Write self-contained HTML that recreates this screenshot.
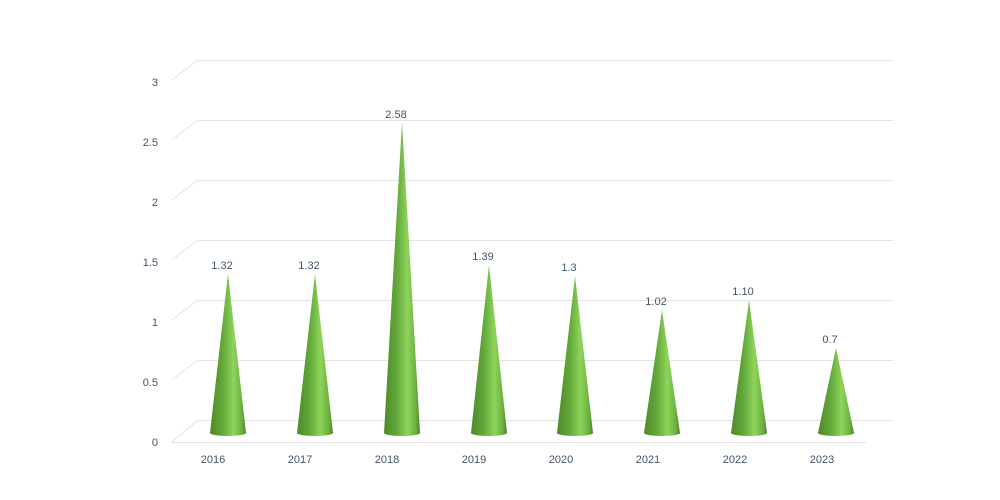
<!DOCTYPE html>
<html><head><meta charset="utf-8"><style>body{margin:0;background:#fff}svg{display:block}text{font-family:"Liberation Sans",sans-serif;font-size:11px;fill:#44546a}</style></head><body>
<svg width="1000" height="500" viewBox="0 0 1000 500">
<defs><linearGradient id="g" x1="0" x2="1" y1="0" y2="0">
<stop offset="0" stop-color="#4e8a28"/><stop offset="0.35" stop-color="#62a83a"/><stop offset="0.65" stop-color="#8fd45a"/><stop offset="0.88" stop-color="#6cb142"/><stop offset="1" stop-color="#4a8526"/></linearGradient></defs>
<g stroke="#e3e3e3" stroke-width="1" fill="none">
<path d="M198 60.5H893M198 120.5H893M198 180.5H893M198 240.5H893M198 300.5H893M198 360.5H893M198 420.5H893"/>
<path d="M172 80L198 60M172 140L198 120M172 200L198 180M172 260L198 240M172 320L198 300M172 380L198 360M172 442L198 420"/>
<path d="M172 442.5H866"/>
</g>
<g text-anchor="end">
<text x="158" y="86">3</text><text x="158" y="146">2.5</text><text x="158" y="206">2</text><text x="158" y="266">1.5</text><text x="158" y="326">1</text><text x="158" y="386">0.5</text><text x="158" y="446">0</text>
</g>
<g text-anchor="middle">
<text x="213" y="463">2016</text><text x="300" y="463">2017</text><text x="387" y="463">2018</text><text x="474" y="463">2019</text><text x="561" y="463">2020</text><text x="648" y="463">2021</text><text x="735" y="463">2022</text><text x="822" y="463">2023</text>
</g>
<g fill="url(#g)">
<path d="M210 433L228 274L246 433A18 3 0 0 1 210 433Z"/>
<path d="M297 433L315 274L333 433A18 3 0 0 1 297 433Z"/>
<path d="M384 433L402 122L420 433A18 3 0 0 1 384 433Z"/>
<path d="M471 433L489 265L507 433A18 3 0 0 1 471 433Z"/>
<path d="M557 433L575 276L593 433A18 3 0 0 1 557 433Z"/>
<path d="M644 433L662 310L680 433A18 3 0 0 1 644 433Z"/>
<path d="M731 433L749 300L767 433A18 3 0 0 1 731 433Z"/>
<path d="M818 433L836 348L854 433A18 3 0 0 1 818 433Z"/>
</g>
<g text-anchor="middle">
<text x="222" y="269">1.32</text><text x="309" y="269">1.32</text><text x="396" y="118">2.58</text><text x="483" y="260">1.39</text><text x="569" y="271">1.3</text><text x="656" y="305">1.02</text><text x="743" y="295">1.10</text><text x="830" y="343">0.7</text>
</g>
</svg>
</body></html>
